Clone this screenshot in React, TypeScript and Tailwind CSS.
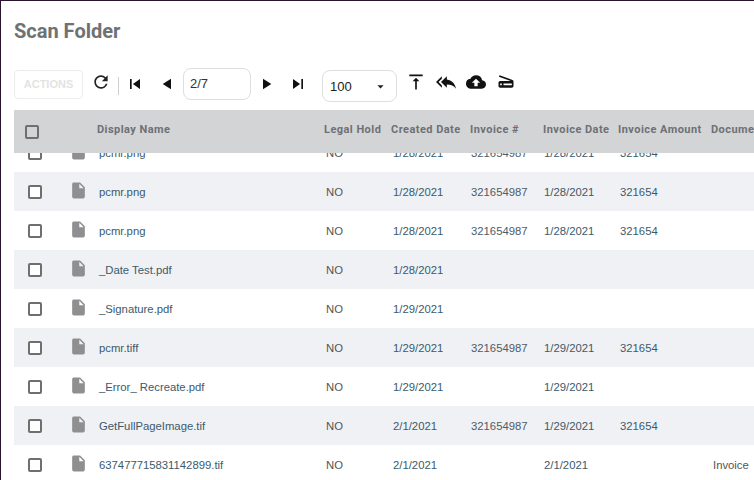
import React from 'react';
import {
  MdRefresh,
  MdSkipPrevious,
  MdSkipNext,
  MdPlayArrow,
  MdArrowDropDown,
  MdVerticalAlignTop,
  MdReplyAll,
  MdCloudUpload,
  MdScanner,
  MdInsertDriveFile,
} from 'react-icons/md';

const gridCols = 'grid grid-cols-[83px_227px_67px_79px_73px_75px_93px_100px]';

const columns = ['Display Name', 'Legal Hold', 'Created Date', 'Invoice #', 'Invoice Date', 'Invoice Amount', 'Document Type'];

const rows = [
  { name: 'pcmr.png', created: '1/28/2021', number: '321654987', date: '1/28/2021', amount: '321654', type: '' },
  { name: 'pcmr.png', created: '1/28/2021', number: '321654987', date: '1/28/2021', amount: '321654', type: '' },
  { name: 'pcmr.png', created: '1/28/2021', number: '321654987', date: '1/28/2021', amount: '321654', type: '' },
  { name: '_Date Test.pdf', created: '1/28/2021', number: '', date: '', amount: '', type: '' },
  { name: '_Signature.pdf', created: '1/29/2021', number: '', date: '', amount: '', type: '' },
  { name: 'pcmr.tiff', created: '1/29/2021', number: '321654987', date: '1/29/2021', amount: '321654', type: '' },
  { name: '_Error_ Recreate.pdf', created: '1/29/2021', number: '', date: '1/29/2021', amount: '', type: '' },
  { name: 'GetFullPageImage.tif', created: '2/1/2021', number: '321654987', date: '1/29/2021', amount: '321654', type: '' },
  { name: '637477715831142899.tif', created: '2/1/2021', number: '', date: '2/1/2021', amount: '', type: 'Invoice' },
];

function Checkbox({ className }: { className: string }) {
  return <div className={`h-[14px] w-[14px] rounded-[2px] border-2 border-[#6f6f6f] ${className}`} />;
}

function Toolbar() {
  return (
    <div className="flex h-[34px] items-start">
      <button className="mt-[2px] h-[29px] w-[69px] rounded-[4px] border border-[#ececec] text-[11px] font-bold text-[#e3e3e3]">
        ACTIONS
      </button>
      <MdRefresh className="ml-[8px] mt-[4px] text-[20px] text-[#222]" />
      <div className="ml-[7px] mt-[9px] h-[18px] w-px bg-[#cfcfcf]" />
      <MdSkipPrevious className="ml-[6px] mt-[6px] text-[20px] text-[#111]" />
      <MdPlayArrow className="ml-[14px] mt-[7px] rotate-180 text-[18px] text-[#111]" />
      <div className="ml-[6px] flex h-[32px] w-[68px] items-center rounded-[8px] border border-[#dedede] pl-[6px] text-[13px] text-[#333]">
        2/7
      </div>
      <MdPlayArrow className="ml-[6px] mt-[7px] text-[18px] text-[#111]" />
      <MdSkipNext className="ml-[13px] mt-[6px] text-[20px] text-[#111]" />
      <div className="ml-[14px] mt-[2px] flex h-[32px] w-[75px] items-center justify-between rounded-[8px] border border-[#dedede] pl-[7px] pr-[8px] text-[13px] text-[#222]">
        <span className="mt-[1px]">100</span>
        <MdArrowDropDown className="text-[15px] text-[#222]" />
      </div>
      <MdVerticalAlignTop className="ml-[9px] mt-[4px] text-[20px] text-[#111]" />
      <MdReplyAll className="ml-[10px] mt-[4px] text-[20px] text-[#111]" />
      <MdCloudUpload className="ml-[10px] mt-[4px] text-[20px] text-[#111]" />
      <MdScanner className="ml-[10px] mt-[3px] text-[20px] text-[#111]" />
    </div>
  );
}

function TableHeader() {
  return (
    <div className={`${gridCols} relative z-10 h-[43px] items-center bg-[#d3d4d6] text-[11px] font-bold text-[#6d7175] [font-family:Roboto,sans-serif]`}>
      <div className="pl-[11px]">
        <Checkbox className="bg-transparent" />
      </div>
      {columns.map((col) => (
        <div key={col} className="mb-[2px] whitespace-nowrap tracking-[0.45px]">{col}</div>
      ))}
    </div>
  );
}

function TableRow({ row, index }: { row: (typeof rows)[number]; index: number }) {
  return (
    <div className={`${gridCols} h-[39px] items-center pt-[2px] text-[11.3px] ${index % 2 === 1 ? 'bg-[#f0f1f4]' : 'bg-white'}`}>
      <div className="flex items-center">
        <Checkbox className="mb-[2px] ml-[14px] bg-white" />
        <MdInsertDriveFile className="mb-[4px] ml-[27px] text-[19px] text-[#8f8f92]" />
      </div>
      <div className="pl-[2px] text-[#3b5a6c]">{row.name}</div>
      <div className="pl-[2px] text-[#555]">NO</div>
      <div className="pl-[2px] text-[#3b5a6c]">{row.created}</div>
      <div className="pl-[1px] text-[#4d5b66]">{row.number}</div>
      <div className="pl-[1px] text-[#3b5a6c]">{row.date}</div>
      <div className="pl-[2px] text-[#3b5a6c]">{row.amount}</div>
      <div className="pl-[2px] text-[#555]">{row.type}</div>
    </div>
  );
}

export default function App() {
  return (
    <div className="h-[480px] w-[754px] overflow-hidden border-l border-t border-[#2a1430] bg-white [font-family:'Liberation_Sans',Arial,sans-serif]">
      <div className="pl-[13px]">
        <h1 className="pt-[19px] text-[20px] font-bold leading-[22px] text-[#6e7275] [font-family:Roboto,sans-serif]">Scan Folder</h1>
        <div className="mt-[26px]">
          <Toolbar />
        </div>
        <div className="mt-[8px]">
          <TableHeader />
          <div className="-mt-[20px]">
            {rows.map((row, i) => (
              <TableRow key={i} row={row} index={i} />
            ))}
          </div>
        </div>
      </div>
    </div>
  );
}
